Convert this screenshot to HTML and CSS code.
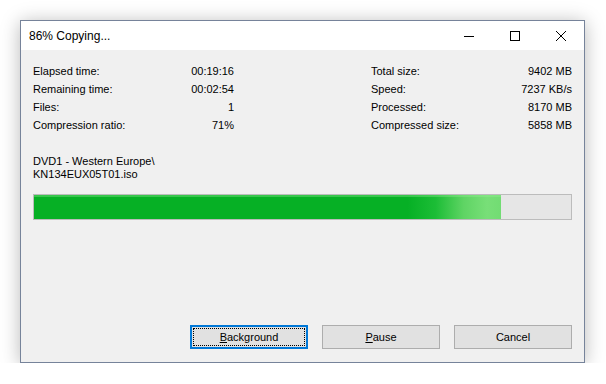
FILE: index.html
```html
<!DOCTYPE html>
<html>
<head>
    <title>86% Copying...</title>
    <link rel="stylesheet" href="styles.css">
</head>
<body>
    <div class="window">
        <div class="titleBar">
            <span class="title">86% Copying...</span>
            <div class="caption">
                <span class="capBtn">
                    <svg width="10" height="10" viewBox="0 0 10 10"><path d="M0 5.5H10" stroke="#000" stroke-width="1"/></svg>
                </span>
                <span class="capBtn">
                    <svg width="10" height="10" viewBox="0 0 10 10"><rect x="0.5" y="0.5" width="9" height="9" fill="none" stroke="#000" stroke-width="1"/></svg>
                </span>
                <span class="capBtn">
                    <svg width="10" height="10" viewBox="0 0 10 10"><path d="M0 0L10 10M10 0L0 10" stroke="#000" stroke-width="1"/></svg>
                </span>
            </div>
        </div>
        <div class="mainContent">
            <section class="stats">
                <div class="statBlock">
                    <span>Elapsed time:</span><span class="val">00:19:16</span>
                    <span>Remaining time:</span><span class="val">00:02:54</span>
                    <span>Files:</span><span class="val">1</span>
                    <span>Compression ratio:</span><span class="val">71%</span>
                </div>
                <div class="statBlock">
                    <span>Total size:</span><span class="val">9402 MB</span>
                    <span>Speed:</span><span class="val">7237 KB/s</span>
                    <span>Processed:</span><span class="val">8170 MB</span>
                    <span>Compressed size:</span><span class="val">5858 MB</span>
                </div>
            </section>
            <div class="filePath">
                DVD1 - Western Europe\<br>
                KN134EUX05T01.iso
            </div>
            <div class="progress">
                <div class="progressFill" style="width: 87%;"></div>
            </div>
            <section class="controls">
                <button class="focused"><span class="focusRing"><u>B</u>ackground</span></button>
                <button><u>P</u>ause</button>
                <button>Cancel</button>
            </section>
        </div>
    </div>
</body>
</html>
```

FILE: styles.css
```css
body {
    padding: 0px;
    margin: 0px;
    background-color: white;
    font: 11px 'Liberation Sans', Arial, sans-serif;
    color: black;
}

.window {
    margin: 20px 0px 0px 20px;
    width: 563px;
    height: 341px;
    border: 1px solid #76839a;
    background-color: #f0f0f0;
    box-shadow: 0px 2px 18px rgba(0, 0, 0, 0.28);
    display: flex;
    flex-direction: column;
}

.titleBar {
    height: 29px;
    background-color: white;
    display: flex;
    align-items: center;
}

.title {
    padding-left: 8px;
    font-size: 12px;
    flex: 1;
}

.caption {
    display: flex;
    height: 100%;
}

.capBtn {
    width: 46px;
    display: flex;
    align-items: center;
    justify-content: center;
}

.mainContent {
    flex: 1;
    display: flex;
    flex-direction: column;
    padding: 12px 12px 13px 12px;
}

.stats {
    display: flex;
    justify-content: space-between;
}

.statBlock {
    width: 201px;
    display: grid;
    grid-template-columns: 1fr auto;
    line-height: 18px;
}

    .statBlock .val {
        text-align: right;
    }

.filePath {
    margin-top: 21px;
    line-height: 13px;
}

.progress {
    margin-top: 13px;
    height: 24px;
    border: 1px solid #bcbcbc;
    background-color: #e6e6e6;
}

.progressFill {
    height: 100%;
    background: linear-gradient(90deg, #06b025 0%, #06b025 80%, #1cbd36 86%, #5fd464 92%, #78df78 97%, #72dc73 100%);
    box-shadow: inset 0px 2px 0px rgba(150, 240, 150, 0.35);
}

.controls {
    margin-top: auto;
    display: flex;
    justify-content: flex-end;
    gap: 14px;
}

    .controls button {
        width: 118px;
        height: 24px;
        font: 11px 'Liberation Sans', Arial, sans-serif;
        color: black;
        background-color: #e1e1e1;
        border: 1px solid #adadad;
        padding: 0px;
    }

    .controls button.focused {
        border: 2px solid #0078d7;
        padding: 1px;
    }

.focusRing {
    display: flex;
    align-items: center;
    justify-content: center;
    height: 100%;
    box-sizing: border-box;
    border: 1px dotted #000;
}
```
